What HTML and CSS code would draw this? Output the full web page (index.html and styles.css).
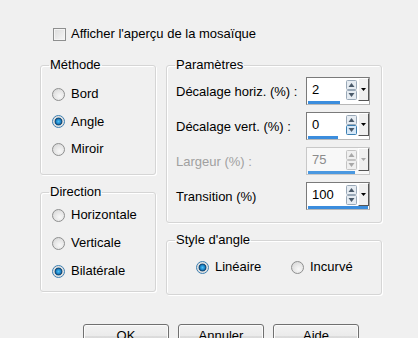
FILE: index.html
```html
<!DOCTYPE html>
<html>
<head>
<meta charset="utf-8">
<title>Mosaïque</title>
<link rel="stylesheet" href="styles.css">
</head>
<body>
<div class="top">
    <label class="check"><span class="box"></span>Afficher l'aperçu de la mosaïque</label>
</div>

<div class="main">
    <div class="col left">
        <fieldset class="group method">
            <legend>Méthode</legend>
            <div class="list">
                <label class="opt"><span class="radio"></span>Bord</label>
                <label class="opt"><span class="radio on"></span>Angle</label>
                <label class="opt"><span class="radio"></span>Miroir</label>
            </div>
        </fieldset>
        <fieldset class="group direction">
            <legend>Direction</legend>
            <div class="list wide">
                <label class="opt"><span class="radio"></span>Horizontale</label>
                <label class="opt"><span class="radio"></span>Verticale</label>
                <label class="opt"><span class="radio on"></span>Bilatérale</label>
            </div>
        </fieldset>
    </div>

    <div class="col right">
        <fieldset class="group params">
            <legend>Paramètres</legend>
            <div class="rows">
                <div class="row">
                    <span class="lbl">Décalage horiz. (%) :</span>
                    <div class="spin">
                        <div class="spin-in">
                            <span class="val">2</span>
                            <span class="arrows"><svg width="11" height="20" viewBox="0 0 11 20"><rect x="0.5" y="0.5" width="10" height="9" rx="1" fill="#e6ecf2" stroke="#9aa9b8"/><rect x="0.5" y="10.5" width="10" height="9" rx="1" fill="#e6ecf2" stroke="#9aa9b8"/><path d="M2.5 7 L5.5 3 L8.5 7 Z" fill="#4a5a6a"/><path d="M2.5 13 L5.5 17 L8.5 13 Z" fill="#4a5a6a"/></svg></span>
                            <span class="drop"><svg width="5" height="3" viewBox="0 0 5 3"><path d="M0 0 H5 L2.5 3 Z" fill="#000"/></svg></span>
                        </div>
                        <div class="bar"><span style="width:32px"></span></div>
                    </div>
                </div>
                <div class="row">
                    <span class="lbl">Décalage vert. (%) :</span>
                    <div class="spin">
                        <div class="spin-in">
                            <span class="val">0</span>
                            <span class="arrows"><svg width="11" height="20" viewBox="0 0 11 20"><rect x="0.5" y="0.5" width="10" height="9" rx="1" fill="#e6ecf2" stroke="#9aa9b8"/><rect x="0.5" y="10.5" width="10" height="9" rx="1" fill="#d6e8f8" stroke="#3c7fb1"/><path d="M2.5 7 L5.5 3 L8.5 7 Z" fill="#4a5a6a"/><path d="M2.5 13 L5.5 17 L8.5 13 Z" fill="#4a5a6a"/></svg></span>
                            <span class="drop"><svg width="5" height="3" viewBox="0 0 5 3"><path d="M0 0 H5 L2.5 3 Z" fill="#000"/></svg></span>
                        </div>
                        <div class="bar"><span style="width:30px"></span></div>
                    </div>
                </div>
                <div class="row off">
                    <span class="lbl">Largeur (%) :</span>
                    <div class="spin">
                        <div class="spin-in">
                            <span class="val">75</span>
                            <span class="arrows"><svg width="11" height="20" viewBox="0 0 11 20"><rect x="0.5" y="0.5" width="10" height="9" rx="1" fill="#f0f0f0" stroke="#c4c4c4"/><rect x="0.5" y="10.5" width="10" height="9" rx="1" fill="#f0f0f0" stroke="#c4c4c4"/><path d="M2.5 7 L5.5 3 L8.5 7 Z" fill="#a8a8a8"/><path d="M2.5 13 L5.5 17 L8.5 13 Z" fill="#a8a8a8"/></svg></span>
                            <span class="drop"><svg width="5" height="3" viewBox="0 0 5 3"><path d="M0 0 H5 L2.5 3 Z" fill="#a8a8a8"/></svg></span>
                        </div>
                        <div class="bar"><span style="width:47px"></span></div>
                    </div>
                </div>
                <div class="row">
                    <span class="lbl">Transition (%)</span>
                    <div class="spin">
                        <div class="spin-in">
                            <span class="val">100</span>
                            <span class="arrows"><svg width="11" height="20" viewBox="0 0 11 20"><rect x="0.5" y="0.5" width="10" height="9" rx="1" fill="#e6ecf2" stroke="#9aa9b8"/><rect x="0.5" y="10.5" width="10" height="9" rx="1" fill="#e6ecf2" stroke="#9aa9b8"/><path d="M2.5 7 L5.5 3 L8.5 7 Z" fill="#4a5a6a"/><path d="M2.5 13 L5.5 17 L8.5 13 Z" fill="#4a5a6a"/></svg></span>
                            <span class="drop"><svg width="5" height="3" viewBox="0 0 5 3"><path d="M0 0 H5 L2.5 3 Z" fill="#000"/></svg></span>
                        </div>
                        <div class="bar"><span style="width:100%"></span></div>
                    </div>
                </div>
            </div>
        </fieldset>
        <fieldset class="group style">
            <legend>Style d'angle</legend>
            <div class="inline">
                <label class="opt first"><span class="radio on"></span>Linéaire</label>
                <label class="opt"><span class="radio"></span>Incurvé</label>
            </div>
        </fieldset>
    </div>
</div>

<div class="buttons">
    <button class="btn">OK</button>
    <button class="btn">Annuler</button>
    <button class="btn">Aide</button>
</div>
</body>
</html>
```

FILE: styles.css
```css
* {
	box-sizing: border-box;
}

body {
	margin: 0;
	padding-top: 27px;
	width: 418px;
	height: 338px;
	overflow: hidden;
	background: #f0f0f0;
	font-family: "Liberation Sans", Arial, sans-serif;
	font-size: 13px;
	color: #000;
}

.top {
	padding-left: 53px;
	height: 14px;
}

.check {
	display: flex;
	align-items: center;
	height: 14px;
	line-height: 14px;
}

.check .box {
	width: 13px;
	height: 13px;
	margin-right: 5px;
	border: 1px solid #8e8f8f;
	background: linear-gradient(135deg, #dcdcdc, #f6f6f6);
	box-shadow: inset 0 0 0 1px #f4f4f4;
}

.main {
	display: flex;
	gap: 10px;
	margin-top: 17px;
	padding-left: 40px;
}

.col {
	display: flex;
	flex-direction: column;
	gap: 10px;
}

.left {
	width: 116px;
}

.right {
	width: 216px;
}

.group {
	margin: 0;
	border: 1px solid #d5d5d5;
	border-radius: 3px;
	box-shadow: inset 1px 1px 0 #fff, 1px 1px 0 #fff;
	padding: 0 0 0 8px;
	min-width: 0;
}

.group legend {
	padding: 0 1px;
	height: 14px;
	line-height: 14px;
}

.list {
	display: flex;
	flex-direction: column;
	gap: 13.5px;
	padding: 15px 0 18px 3px;
}

.list.wide {
	gap: 14px;
	padding: 9px 0 13px 3px;
}

.opt {
	display: flex;
	align-items: center;
	height: 14px;
	line-height: 14px;
}

.radio {
	width: 13px;
	height: 13px;
	margin-right: 6px;
	border-radius: 50%;
	border: 1px solid #8e8f8f;
	background: radial-gradient(circle at 60% 65%, #f8f8f8 0%, #e4e4e4 55%, #cfcfcf 100%);
	flex: none;
}

.radio.on {
	background: radial-gradient(circle at 50% 50%, #4cc2f8 0%, #1f86c8 28%, #0b3f6c 45%, #dcdcdc 55%, #f4f4f4 100%);
	border-color: #3c7fb1;
}

.rows {
	display: flex;
	flex-direction: column;
	gap: 7px;
	padding: 5px 10px 12px 1px;
}

.row {
	display: flex;
	align-items: center;
	height: 28px;
}

.row .lbl {
	width: 130px;
}

.row.off .lbl {
	color: #a0a0a0;
}

.spin {
	width: 64px;
	height: 28px;
	background: #fff;
	border: 1px solid #7a7a7a;
	border-right-color: #a0a0a0;
	border-bottom-color: #b8b8b8;
	display: flex;
	flex-direction: column;
}

.row.off .spin {
	border-color: #c8c8c8;
	background: #f8f8f8;
}

.spin-in {
	flex: 1;
	display: flex;
	align-items: flex-start;
	padding-top: 1px;
}

.val {
	flex: 1;
	padding: 3px 0 0 5px;
	line-height: 16px;
	font-size: 13px;
}

.row.off .val {
	color: #8c8c8c;
}

.arrows {
	width: 11px;
	display: flex;
	margin-top: 1px;
}

.drop {
	width: 11px;
	height: 23px;
	margin: -1px 0 0 1px;
	display: flex;
	justify-content: center;
	padding-top: 9px;
	background: #f0f0f0;
	border: 1px solid;
	border-color: #fff #555 #555 #fff;
}

.bar {
	height: 3px;
	padding: 0 1px 0 1px;
}

.bar span {
	display: block;
	height: 3px;
	background: #3b8ddd;
}

.row.off .bar span {
	background: #4a98e0;
}

.inline {
	display: flex;
	padding: 13px 0 20px 21px;
}

.inline .opt.first {
	width: 95px;
}

.buttons {
	display: flex;
	gap: 9px;
	margin-top: 29px;
	padding-left: 83px;
}

.btn {
	width: 86px;
	height: 23px;
	padding: 0;
	border: 1px solid #707070;
	border-radius: 3px;
	background: linear-gradient(#f2f2f2 0%, #ebebeb 50%, #dddddd 51%, #cfcfcf 100%);
	box-shadow: inset 0 0 0 1px #fbfbfb;
	font-family: "Liberation Sans", Arial, sans-serif;
	font-size: 13px;
	color: #000;
}
```
